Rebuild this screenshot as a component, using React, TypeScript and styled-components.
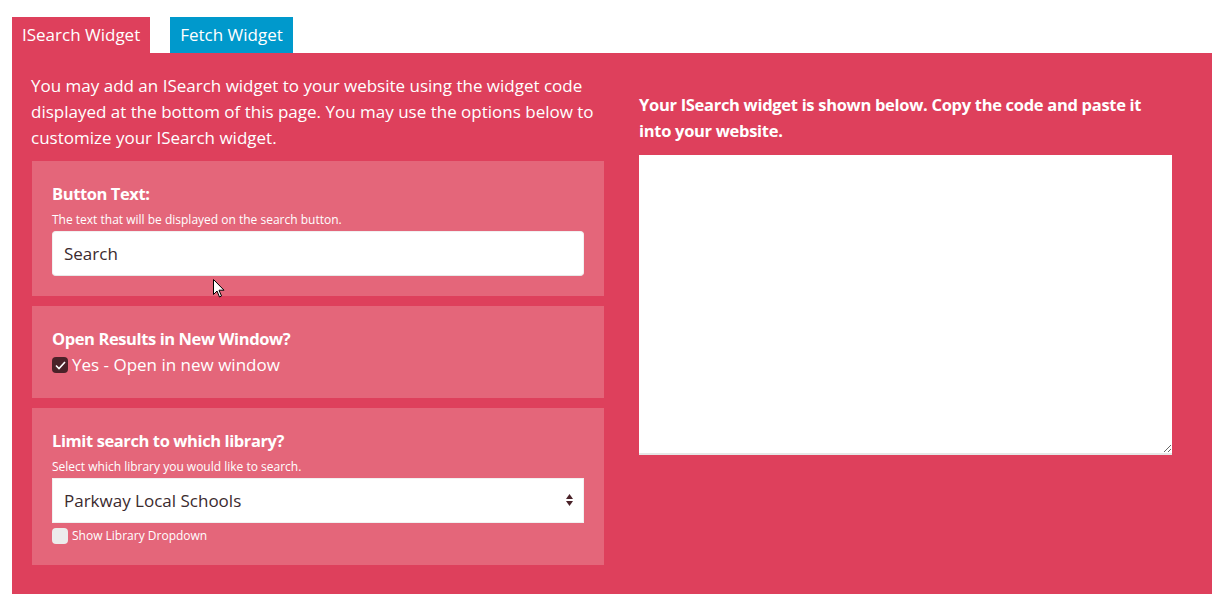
import styled, {createGlobalStyle} from 'styled-components';

const GlobalStyle = createGlobalStyle`
    body {
        margin: 0;
        background: #ffffff;
        font-family: "Open Sans", "Liberation Sans", sans-serif;
    }
`;

const Page = styled.div`
    padding: 17px 11px 12px 12px;
`;

const Tabs = styled.div`
    display: flex;
    gap: 20px;
    height: 36px;
`;

const Tab = styled.div<{ $color: string }>`
    background-color: ${props => props.$color};
    color: #ffffff;
    font-size: 17px;
    line-height: 36px;
    padding: 0 10px;
`;

const Panel = styled.div`
    background-color: #de405c;
    padding: 20px 40px 29px 19px;
    display: grid;
    grid-template-columns: 573px 533px;
    column-gap: 35px;
    align-items: start;
`;

const Intro = styled.p`
    margin: 0 0 10px;
    color: #ffffff;
    font-size: 17px;
    line-height: 26px;
`;

const Column = styled.div`
    display: flex;
    flex-direction: column;
`;

const Card = styled.div`
    background-color: #e4667a;
    padding: 20px;
    margin-left: 1px;
    margin-bottom: 10px;

    &:last-child {
        margin-bottom: 0;
        padding-bottom: 21px;
    }
`;

const Heading = styled.h3`
    margin: 0;
    color: #ffffff;
    font-size: 16.5px;
    font-weight: 700;
    line-height: 26px;
    letter-spacing: -0.4px;
`;

const Hint = styled.div`
    color: #ffffff;
    font-size: 12px;
    line-height: 14px;
    margin: 6px 0 4px;
`;

const TextInput = styled.input`
    display: block;
    box-sizing: border-box;
    width: 100%;
    height: 45px;
    border: 1px solid #f1f1f1;
    border-bottom-color: #e8e8e8;
    border-radius: 4px;
    padding: 0 11px;
    font-family: inherit;
    font-size: 17px;
    color: #3b2a2e;
    background: #ffffff;
    outline: none;
`;

const SelectWrap = styled.div`
    position: relative;
`;

const Select = styled.select`
    display: block;
    box-sizing: border-box;
    width: 100%;
    height: 45px;
    border: 1px solid #f1f1f1;
    border-radius: 0;
    padding: 0 11px;
    font-family: inherit;
    font-size: 17px;
    color: #3b2a2e;
    background: #ffffff;
    appearance: none;
    outline: none;
`;

const Arrows = styled.svg`
    position: absolute;
    right: 11px;
    top: 16px;
    pointer-events: none;
`;

const CheckRow = styled.label<{ $small?: boolean }>`
    display: flex;
    align-items: center;
    gap: 4px;
    color: #ffffff;
    font-size: ${props => props.$small ? '12px' : '17px'};
    line-height: ${props => props.$small ? '16px' : '26px'};
    margin-top: ${props => props.$small ? '5px' : '0'};
`;

const Box = styled.span<{ $checked?: boolean }>`
    width: 16px;
    height: 16px;
    border-radius: 4px;
    background-color: ${props => props.$checked ? '#4a2229' : '#ececec'};
    display: flex;
    align-items: center;
    justify-content: center;
    flex-shrink: 0;
`;

const Side = styled.div`
    margin-top: 19px;
`;

const SideHeading = styled(Heading)`
    margin-bottom: 11px;
    letter-spacing: -0.3px;
`;

const CodeArea = styled.textarea`
    display: block;
    box-sizing: border-box;
    width: 533px;
    height: 300px;
    border: none;
    border-bottom: 2px solid #e6e6e6;
    background: #ffffff;
    resize: vertical;
    outline: none;
`;

const Cursor = styled.svg`
    position: absolute;
    left: 213px;
    top: 279px;
    pointer-events: none;
`;

function App() {
    return (
        <Page>
            <GlobalStyle/>
            <Tabs>
                <Tab $color="#de405c">ISearch Widget</Tab>
                <Tab $color="#0099cc">Fetch Widget</Tab>
            </Tabs>
            <Panel>
                <Column>
                    <Intro>
                        You may add an ISearch widget to your website using the widget code displayed at the
                        bottom of this page. You may use the options below to customize your ISearch widget.
                    </Intro>
                    <Card>
                        <Heading>Button Text:</Heading>
                        <Hint>The text that will be displayed on the search button.</Hint>
                        <TextInput defaultValue="Search"/>
                    </Card>
                    <Card>
                        <Heading>Open Results in New Window?</Heading>
                        <CheckRow>
                            <Box $checked>
                                <svg width="11" height="9" viewBox="0 0 11 9">
                                    <path d="M1 4.5 L4 7.5 L10 1" fill="none" stroke="#ffffff" strokeWidth="1.6"/>
                                </svg>
                            </Box>
                            Yes - Open in new window
                        </CheckRow>
                    </Card>
                    <Card>
                        <Heading>Limit search to which library?</Heading>
                        <Hint>Select which library you would like to search.</Hint>
                        <SelectWrap>
                            <Select defaultValue="parkway">
                                <option value="parkway">Parkway Local Schools</option>
                            </Select>
                            <Arrows width="7" height="12" viewBox="0 0 7 12">
                                <path d="M3.5 0 L7 5 L0 5 Z" fill="#4a2229"/>
                                <path d="M0 7 L7 7 L3.5 12 Z" fill="#4a2229"/>
                            </Arrows>
                        </SelectWrap>
                        <CheckRow $small>
                            <Box/>
                            Show Library Dropdown
                        </CheckRow>
                    </Card>
                </Column>
                <Side>
                    <SideHeading>
                        Your ISearch widget is shown below. Copy the code and paste it into your website.
                    </SideHeading>
                    <CodeArea/>
                </Side>
            </Panel>
            <Cursor width="12" height="19" viewBox="0 0 12 19">
                <path d="M0.5 0.5 L0.5 15.5 L4 12 L6.5 18 L8.5 17 L6 11.2 L11 11.2 Z" fill="#ffffff" stroke="#000000" strokeWidth="1"/>
            </Cursor>
        </Page>
    );
}

export default App;
